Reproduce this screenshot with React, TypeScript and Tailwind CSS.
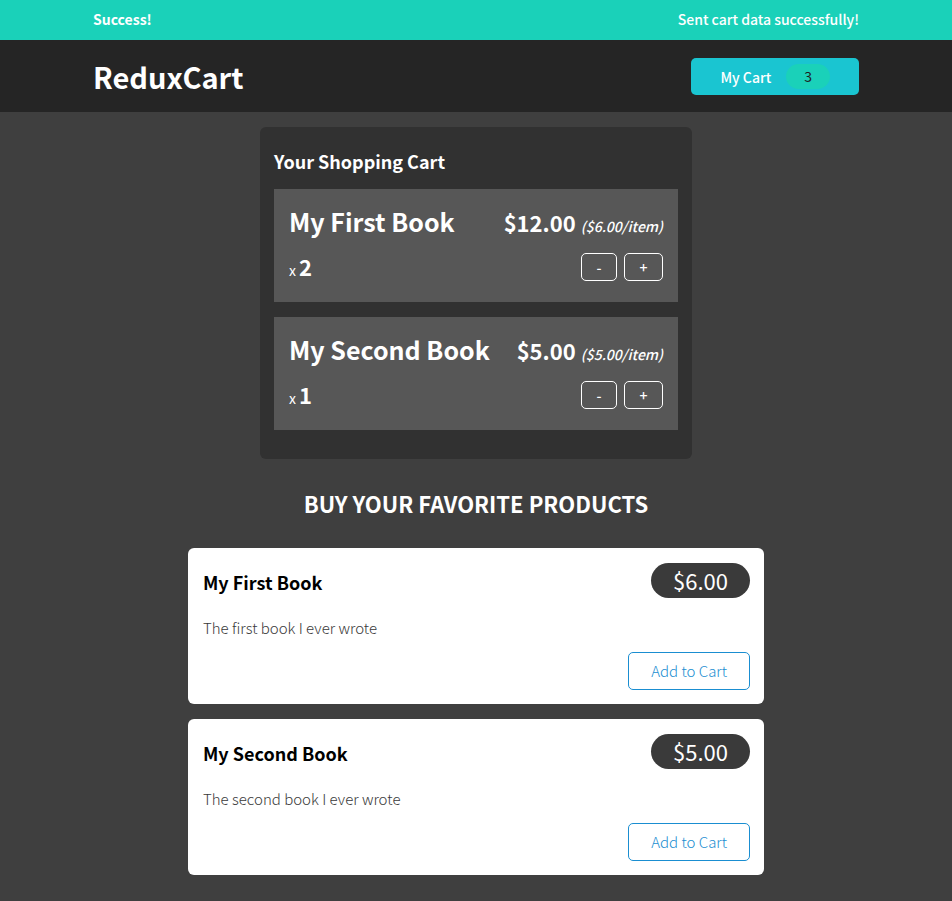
type CartLine = { title: string; total: string; unit: string; quantity: number };
type Product = { title: string; price: string; description: string };

const cartLines: CartLine[] = [
  { title: 'My First Book', total: '$12.00', unit: '($6.00/item)', quantity: 2 },
  { title: 'My Second Book', total: '$5.00', unit: '($5.00/item)', quantity: 1 },
];

const products: Product[] = [
  { title: 'My First Book', price: '$6.00', description: 'The first book I ever wrote' },
  { title: 'My Second Book', price: '$5.00', description: 'The second book I ever wrote' },
];

function Notification() {
  return (
    <section className="flex h-10 items-center justify-between bg-[#1ad1b9] px-[93px] pb-0.5 text-white">
      <h2 className="font-bold">Success!</h2>
      <p className="font-medium">Sent cart data successfully!</p>
    </section>
  );
}

function Header() {
  return (
    <header className="flex h-18 items-center justify-between bg-[#252525] px-[93px] text-white">
      <h1 className="text-[29px] leading-9 font-bold">ReduxCart</h1>
      <button className="flex h-[37px] items-center rounded-[5px] bg-[#1ac5d1] px-[29px]">
        <span className="pt-0.5 font-medium">My Cart</span>
        <span className="ml-[15px] rounded-full bg-[#1ad1b9] px-[18px] leading-[25px] text-[#1d1d1d]">3</span>
      </button>
    </header>
  );
}

function CartItem({ title, total, unit, quantity }: CartLine) {
  return (
    <li className="mb-[15px] bg-[#575757] px-[15px] pt-[14px] pb-[18px] text-white last:mb-0">
      <div className="flex items-baseline justify-between">
        <h3 className="text-[25px] leading-9 font-bold">{title}</h3>
        <div className="text-[22px] leading-9 font-bold">
          {total} <span className="text-sm font-medium italic">{unit}</span>
        </div>
      </div>
      <div className="mt-2 flex h-9 items-center justify-between">
        <div>
          x <span className="text-[22px] leading-8 font-bold">{quantity}</span>
        </div>
        <div className="flex gap-[7px] pt-0.5">
          <button aria-label={`Remove one ${title}`} className="h-7 w-9 rounded-[5px] border border-white font-medium">-</button>
          <button aria-label={`Add one ${title}`} className="h-7 w-[39px] rounded-[5px] border border-white font-medium">+</button>
        </div>
      </div>
    </li>
  );
}

function Cart() {
  return (
    <section className="mx-auto mt-[15px] w-[90%] max-w-[432px] rounded-md bg-[#313131] px-[14px] pt-[19px] pb-[29px] text-white">
      <h2 className="mb-[13px] text-lg leading-[30px] font-bold">Your Shopping Cart</h2>
      <ul>
        {cartLines.map((line) => (
          <CartItem key={line.title} {...line} />
        ))}
      </ul>
    </section>
  );
}

function ProductItem({ title, price, description }: Product) {
  return (
    <li className="rounded-md bg-white pt-[15px] pr-[14px] pb-[14px] pl-[15px]">
      <header className="flex items-start justify-between">
        <h3 className="pt-[3px] text-lg leading-8 font-bold text-black">{title}</h3>
        <div className="rounded-full bg-[#3a3a3a] px-[22px] text-[22px] leading-[35px] text-white">{price}</div>
      </header>
      <p className="mt-[18px] text-[15px] leading-6 font-light text-[#3a3a3a]">{description}</p>
      <div className="mt-3 flex justify-end">
        <button className="h-[38px] rounded-[5px] border border-[#1a8ed1] px-[22px] text-[15px] font-light text-[#1a8ed1]">Add to Cart</button>
      </div>
    </li>
  );
}

export default function App() {
  return (
    <div className="min-h-screen bg-[#3f3f3f] pb-6 font-['Noto_Sans_CJK_JP','Noto_Sans',sans-serif] text-sm leading-6">
      <Notification />
      <Header />
      <main>
        <Cart />
        <section className="mx-auto mt-7 w-[90%] max-w-[576px]">
          <h2 className="text-center text-[22px] leading-8 font-bold text-white uppercase">Buy your favorite products</h2>
          <ul className="mt-[29px] flex flex-col gap-[15px]">
            {products.map((product) => (
              <ProductItem key={product.title} {...product} />
            ))}
          </ul>
        </section>
      </main>
    </div>
  );
}
